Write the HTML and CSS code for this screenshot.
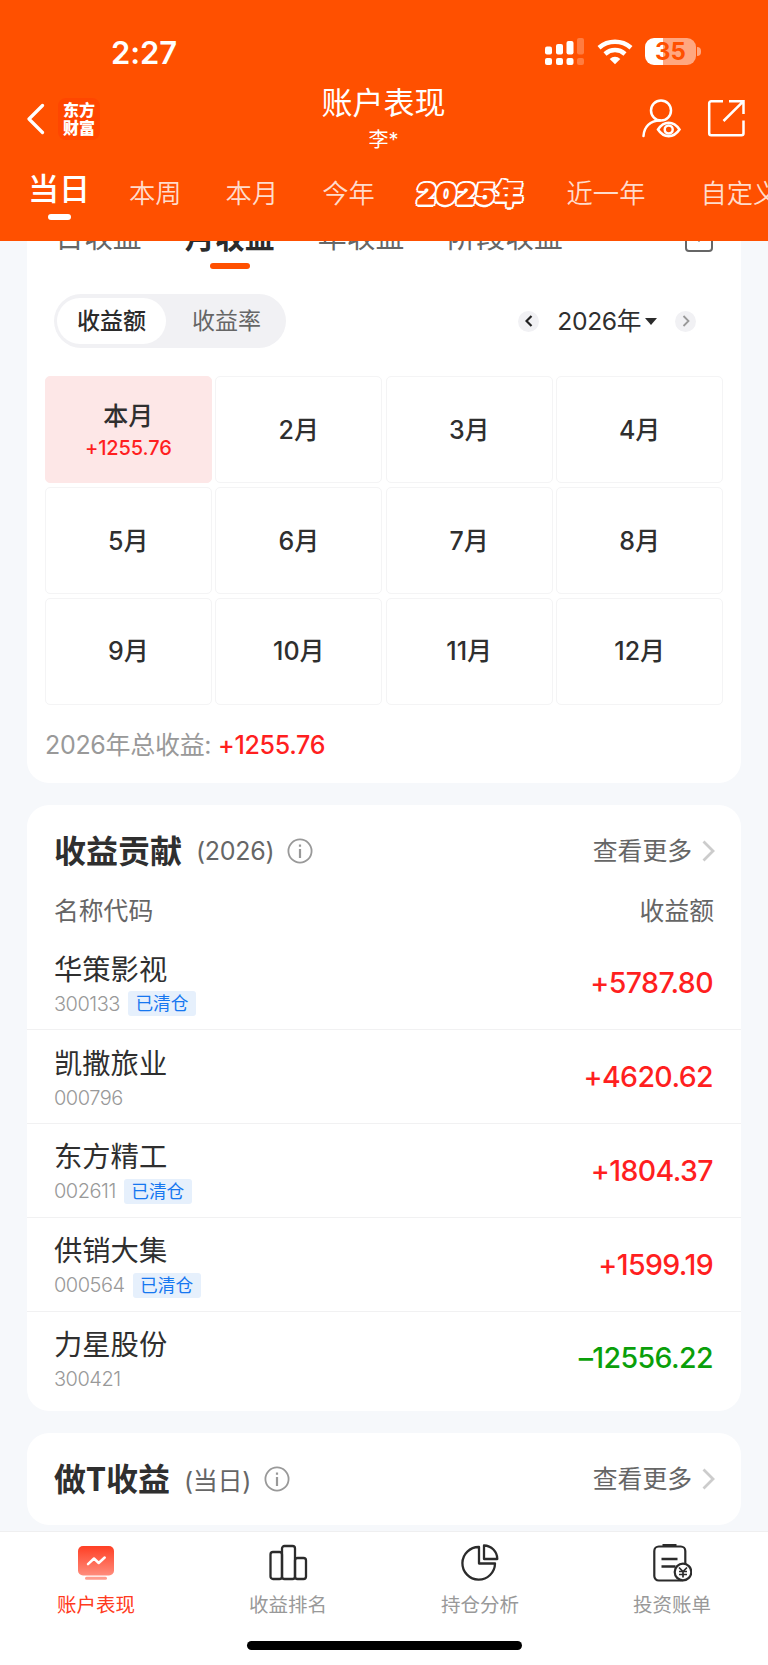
FILE: index.html
```html
<!DOCTYPE html>
<html lang="zh-CN">
<head>
    <meta charset="UTF-8">
    <title>账户表现</title>
    <link rel="stylesheet" href="styles.css">
</head>
<body>
<header class="header">
    <div class="status">
        <span class="time">2:27</span>
        <div class="statusIcons">
            <svg class="signal" width="40" height="28" viewBox="0 0 40 28" fill="#fff">
                <rect x="0" y="8.500" width="7" height="8" rx="2"/>
                <rect x="11" y="6" width="7" height="10.500" rx="2"/>
                <rect x="21.500" y="3" width="7" height="13.500" rx="2"/>
                <rect x="32" y="0" width="7" height="16.500" rx="2" opacity=".25"/>
                <rect x="0" y="20" width="7" height="7" rx="2"/>
                <rect x="11" y="20" width="7" height="7" rx="2"/>
                <rect x="21.500" y="20" width="7" height="7" rx="2"/>
                <rect x="32" y="20" width="7" height="7" rx="2" opacity=".25"/>
            </svg>
            <svg class="wifi" width="36" height="26" viewBox="0 0 36 26" fill="none" stroke="#fff" stroke-width="4.600">
                <path d="M2 8.700Q9 2.800 18 2.800T34 8.700"/>
                <path d="M8 14.900Q12.500 11 18 11T28 14.900"/>
                <path d="M18 25.300l-5.300-5.400Q15 17.700 18 17.700t5.300 2.200z" fill="#fff" stroke="none"/>
            </svg>
            <div class="battery"><span>35</span></div>
            <i class="batteryCap"></i>
        </div>
    </div>
    <div class="titleBar">
        <div class="left">
            <svg width="18" height="32" viewBox="0 0 18 32" fill="none" stroke="#fff" stroke-width="3.200" stroke-linecap="round" stroke-linejoin="round">
                <path d="M15.500 2.500L2 16l13.500 13.500"/>
            </svg>
            <div class="logo">东方<br>财富</div>
        </div>
        <div class="title">
            <h1>账户表现</h1>
            <p>李*</p>
        </div>
        <div class="right">
            <svg width="40" height="40" viewBox="0 0 40 40" fill="none" stroke="#fff" stroke-width="2.500" stroke-linecap="round">
                <circle cx="20" cy="11.500" r="10"/>
                <path d="M2.500 37C3 28 9 21.500 19 21.500"/>
                <path d="M17 30.500Q21.500 23.800 27.700 23.800T38.500 30.500Q34 37.200 27.700 37.200T17 30.500z"/>
                <circle cx="27.700" cy="30.500" r="4"/>
            </svg>
            <svg width="38" height="38" viewBox="0 0 38 38" fill="none" stroke="#fff" stroke-width="2.500">
                <path d="M16 2.200H4.200a2 2 0 0 0-2 2v30a2 2 0 0 0 2 2H34.500a2 2 0 0 0 2-2V21.500"/>
                <path d="M22 2.200H36.500V15M36 2.700L16.500 22"/>
            </svg>
        </div>
    </div>
    <nav class="periods">
        <a class="period active">当日</a>
        <a class="period">本周</a>
        <a class="period">本月</a>
        <a class="period">今年</a>
        <a class="period special">2025年</a>
        <a class="period year1">近一年</a>
        <a class="period">自定义</a>
    </nav>
</header>

<main class="content">
    <section class="card calendar">
        <div class="tabs">
            <span class="tab">日收益</span>
            <span class="tab active">月收益</span>
            <span class="tab">年收益</span>
            <span class="tab">阶段收益</span>
            <svg class="tabIcon" width="28" height="28" viewBox="0 0 28 28" fill="none" stroke="#666" stroke-width="2">
                <rect x="1" y="2" width="26" height="25" rx="3"/>
                <path d="M14 8v9.500"/>
            </svg>
        </div>
        <div class="tabLine"><i></i></div>
        <div class="controls">
            <div class="toggle">
                <span class="on">收益额</span>
                <span>收益率</span>
            </div>
            <div class="year">
                <i class="round">
                    <svg width="8" height="12" viewBox="0 0 8 12" fill="none" stroke="#222" stroke-width="2.200"><path d="M6.500 1L1.500 6l5 5"/></svg>
                </i>
                <span>2026年</span>
                <i class="caret"></i>
                <i class="round">
                    <svg width="8" height="12" viewBox="0 0 8 12" fill="none" stroke="#999" stroke-width="1.800"><path d="M1.500 1l5 5-5 5"/></svg>
                </i>
            </div>
        </div>
        <div class="months">
            <div class="month current">本月<small>+1255.76</small></div>
            <div class="month">2月</div>
            <div class="month">3月</div>
            <div class="month">4月</div>
            <div class="month">5月</div>
            <div class="month">6月</div>
            <div class="month">7月</div>
            <div class="month">8月</div>
            <div class="month">9月</div>
            <div class="month">10月</div>
            <div class="month">11月</div>
            <div class="month">12月</div>
        </div>
        <p class="total">2026年总收益: <b>+1255.76</b></p>
    </section>

    <section class="card contribution">
        <div class="cardHead">
            <h2>收益贡献</h2>
            <span class="sub">(2026)</span>
            <svg class="info" width="26" height="26" viewBox="0 0 26 26" fill="none" stroke="#999" stroke-width="1.800">
                <circle cx="13" cy="13" r="11.600"/>
                <path d="M13 11v9M13 6.500v2.300" stroke-width="2.200"/>
            </svg>
            <a class="more">查看更多
                <svg width="13" height="22" viewBox="0 0 13 22" fill="none" stroke="#ccc" stroke-width="2.800"><path d="M1.500 1.500L11 11l-9.500 9.500"/></svg>
            </a>
        </div>
        <div class="columns"><span>名称代码</span><span>收益额</span></div>
        <div class="stock">
            <div class="name">华策影视<small>300133<em>已清仓</em></small></div>
            <span class="amount">+5787.80</span>
        </div>
        <div class="stock">
            <div class="name">凯撒旅业<small>000796</small></div>
            <span class="amount">+4620.62</span>
        </div>
        <div class="stock">
            <div class="name">东方精工<small>002611<em>已清仓</em></small></div>
            <span class="amount">+1804.37</span>
        </div>
        <div class="stock">
            <div class="name">供销大集<small>000564<em>已清仓</em></small></div>
            <span class="amount">+1599.19</span>
        </div>
        <div class="stock">
            <div class="name">力星股份<small>300421</small></div>
            <span class="amount down">–12556.22</span>
        </div>
    </section>

    <section class="card trades">
        <div class="cardHead">
            <h2>做T收益</h2>
            <span class="sub">(当日)</span>
            <svg class="info" width="26" height="26" viewBox="0 0 26 26" fill="none" stroke="#999" stroke-width="1.800">
                <circle cx="13" cy="13" r="11.600"/>
                <path d="M13 11v9M13 6.500v2.300" stroke-width="2.200"/>
            </svg>
            <a class="more">查看更多
                <svg width="13" height="22" viewBox="0 0 13 22" fill="none" stroke="#ccc" stroke-width="2.800"><path d="M1.500 1.500L11 11l-9.500 9.500"/></svg>
            </a>
        </div>
    </section>
</main>

<footer class="footer">
    <nav class="bottomNav">
        <a class="item active">
            <svg width="40" height="40" viewBox="0 0 40 40">
                <defs>
                    <linearGradient id="screen" x1="0" y1="0" x2="0" y2="1">
                        <stop offset="0" stop-color="#ff3f24"/>
                        <stop offset="1" stop-color="#ff8c7c"/>
                    </linearGradient>
                </defs>
                <rect x="2" y="3" width="36" height="29.500" rx="5" fill="url(#screen)"/>
                <rect x="9" y="33.700" width="22" height="3" rx="1.500" fill="#ff9c8e"/>
                <path d="M12 21.200l6-5.700 4.700 4.500 6-5.500" fill="none" stroke="#fff" stroke-width="2.500" stroke-linecap="round" stroke-linejoin="round"/>
            </svg>
            账户表现
        </a>
        <a class="item">
            <svg width="40" height="40" viewBox="0 0 40 40" fill="none" stroke="#2b2b2b" stroke-width="2.300">
                <rect x="2.500" y="9" width="11.500" height="27" rx="2.500"/>
                <rect x="14" y="3" width="13" height="33" rx="2.500"/>
                <rect x="27" y="15" width="11" height="21" rx="2.500"/>
            </svg>
            收益排名
        </a>
        <a class="item">
            <svg width="40" height="40" viewBox="0 0 40 40" fill="none" stroke="#2b2b2b" stroke-width="2.300" stroke-linejoin="round">
                <path d="M19 4A16.300 16.300 0 1 0 35 20.500H19z"/>
                <path d="M24 2.500V16h13.300A13.500 13.500 0 0 0 24 2.500z"/>
            </svg>
            持仓分析
        </a>
        <a class="item">
            <svg width="40" height="40" viewBox="0 0 40 40" fill="none" stroke="#2b2b2b" stroke-width="2.200">
                <rect x="2.300" y="3.500" width="31" height="34" rx="4.500"/>
                <path d="M10.500 2.500h14" stroke-width="3"/>
                <path d="M9.500 16h16M9.500 23.500h14" stroke-width="2.400"/>
                <circle cx="31" cy="29" r="8.300" fill="#fff"/>
                <path d="M27 24.500l4 4 4-4M31 28.500v6M27 28.500h8M27 31.500h8" stroke-width="1.700"/>
            </svg>
            投资账单
        </a>
    </nav>
    <i class="homeBar"></i>
</footer>
</body>
</html>
```

FILE: styles.css
```css
* {
    box-sizing: border-box;
}

body {
    width: 768px;
    height: 1665px;
    margin: 0;
    overflow: hidden;
    font-family: Inter, "Noto Sans CJK SC", sans-serif;
    color: #2f2f2f;
    background: #f6f8fb;
}

h1, h2, p {
    margin: 0;
}

i, em {
    font-style: normal;
}

svg {
    display: block;
    flex-shrink: 0;
}

/* header */

.header {
    height: 241px;
    overflow: hidden;
    color: #fff;
    background: #ff5000;
}

.status {
    display: flex;
    justify-content: space-between;
    height: 84px;
    padding: 38px 67px 0 111px;
}

.time {
    font-size: 31px;
    line-height: 30px;
    font-weight: 600;
    letter-spacing: -.1px;
}

.statusIcons {
    display: flex;
    align-items: flex-start;
}

.wifi {
    margin: 1px 12px 0 12px;
}

.battery {
    width: 51px;
    height: 27px;
    border-radius: 9px;
    text-align: center;
    font-size: 24px;
    line-height: 27px;
    font-weight: 700;
    color: #ff5000;
    background: linear-gradient(90deg, #fff 35%, #ffa780 35%);
}

.batteryCap {
    width: 4px;
    height: 9px;
    margin: 9px 0 0 1px;
    border-radius: 0 5px 5px 0;
    background: #ffa780;
}

.titleBar {
    display: grid;
    grid-template-columns: 1fr 200px 1fr;
    height: 72px;
    padding: 0 23px 0 27px;
}

.left {
    display: flex;
    align-items: center;
    gap: 13px;
    height: 70px;
}

.logo {
    width: 42px;
    height: 42px;
    padding-top: 3px;
    border-radius: 8px;
    text-align: center;
    font-family: "Noto Sans CJK SC", sans-serif;
    font-size: 16px;
    line-height: 17.500px;
    font-weight: 900;
    background: #ff4600;
}

.title {
    margin-left: -5px;
    text-align: center;
}

.title h1 {
    font-size: 31px;
    line-height: 38px;
    font-weight: 400;
}

.title p {
    font-size: 20px;
    line-height: 36px;
}

.right {
    display: flex;
    justify-content: flex-end;
    gap: 26px;
    padding-top: 15px;
}

.periods {
    display: flex;
    padding-left: 28px;
    height: 85px;
    white-space: nowrap;
}

.period {
    padding-top: 20px;
    margin-right: 44px;
    font-size: 26.300px;
    line-height: 36px;
    color: #ffdccc;
    font-weight: 350;
}

.period.active {
    padding-top: 13px;
    margin-right: 39px;
    font-size: 31px;
    line-height: 40px;
    font-weight: 500;
    color: #fff;
}

.period.active::after {
    content: "";
    display: block;
    width: 23px;
    height: 6px;
    margin: 5px auto 0;
    border-radius: 3px;
    background: #fff;
}

.period.special {
    margin: 0 43.500px 0 -2px;
    font-size: 28px;
    font-weight: 900;
    letter-spacing: .7px;
    color: #ff5000;
    -webkit-text-stroke: 1px #ff5000;
    text-shadow: 2.500px 0 #fff, -2.500px 0 #fff, 0 2.500px #fff, 0 -2.500px #fff,
        1.800px 1.800px #fff, -1.800px 1.800px #fff, 1.800px -1.800px #fff, -1.800px -1.800px #fff;
    transform: skewX(-5deg);
}

.period.year1 {
    margin-right: 55px;
}

/* cards */

.content {
    height: 1290px;
    padding: 0 27px;
    overflow: hidden;
}

.card {
    margin-bottom: 22px;
    border-radius: 22px;
    background: #fff;
}

.calendar {
    height: 542px;
    border-radius: 0 0 22px 22px;
}

.tabs {
    display: flex;
    align-items: flex-end;
    height: 12px;
    padding: 0 28px 0 28px;
    overflow: hidden;
}

.tab {
    margin-right: 43px;
    font-size: 28.900px;
    line-height: 31px;
    color: #666;
}

.tab.active {
    font-size: 30px;
    line-height: 32px;
    font-weight: 700;
    color: #2b2b2b;
}

.tabIcon {
    margin: 0 0 1px auto;
}

.tabLine {
    height: 41px;
    padding: 10px 0 0 183px;
}

.tabLine i {
    display: block;
    width: 40px;
    height: 6px;
    border-radius: 3px;
    background: #ff5000;
}

.controls {
    display: flex;
    justify-content: space-between;
    align-items: center;
    height: 54px;
    padding: 0 45px 0 27px;
}

.toggle {
    display: flex;
    width: 232px;
    height: 54px;
    padding: 4px 3px;
    border-radius: 27px;
    background: #f1f1f4;
}

.toggle span {
    width: 109px;
    border-radius: 23px;
    text-align: center;
    font-size: 23px;
    line-height: 47px;
    color: #666;
}

.toggle span + span {
    margin-left: 6px;
}

.toggle .on {
    font-weight: 500;
    color: #2b2b2b;
    background: #fff;
}

.year {
    display: flex;
    align-items: center;
    font-size: 24.700px;
    line-height: 36px;
}

.year span {
    margin-left: 18px;
    letter-spacing: -.4px;
}

.round {
    display: flex;
    align-items: center;
    justify-content: center;
    width: 21px;
    height: 21px;
    border-radius: 50%;
    background: #f1f1f4;
}

.caret {
    margin: 1px 18px 0 4px;
    border: 6.500px solid transparent;
    border-top: 7px solid #2b2b2b;
    border-bottom: 0;
}

.months {
    display: grid;
    grid-template-columns: repeat(4, 1fr);
    grid-auto-rows: 107px;
    gap: 3.800px;
    padding: 28.400px 18px 0;
}

.month {
    display: flex;
    flex-direction: column;
    align-items: center;
    justify-content: center;
    border: 1px solid #f4f4f5;
    border-radius: 5px;
    font-size: 25px;
    line-height: 34px;
    font-weight: 550;
}

.month small {
    font-size: 20px;
    line-height: 30px;
    font-weight: 500;
    letter-spacing: -.1px;
    color: #ff1f1f;
}

.month.current {
    padding-top: 2px;
    border-color: #fde7e7;
    background: #fde7e7;
}

.total {
    padding: 22px 18px 0;
    font-size: 25px;
    line-height: 36px;
    letter-spacing: -.3px;
    color: #999;
}

.total b {
    font-weight: 550;
    color: #ff1f1f;
}

.contribution {
    height: 606px;
}

.cardHead {
    display: flex;
    align-items: center;
    height: 92px;
    padding: 0 26px 0 27px;
}

.cardHead h2 {
    margin-top: -4px;
    font-family: "Noto Sans CJK SC", sans-serif;
    font-size: 32px;
    line-height: 44px;
    font-weight: 700;
}

.sub {
    margin: 0 13px 0 14px;
    font-size: 25px;
    letter-spacing: -.3px;
    color: #666;
}

.more {
    display: flex;
    align-items: center;
    gap: 10px;
    margin-left: auto;
    font-size: 24.800px;
    line-height: 36px;
    color: #666;
}

.columns {
    display: flex;
    justify-content: space-between;
    height: 39.500px;
    padding: 0 27px;
    font-size: 24.800px;
    line-height: 28px;
    color: #666;
}

.stock {
    display: flex;
    justify-content: space-between;
    align-items: center;
    height: 93.800px;
    padding: 0 28px 0 27px;
    border-bottom: 1px solid #f1f1f2;
}

.stock:last-child {
    height: 92px;
    border-bottom: 0;
}

.name {
    padding-top: 2px;
    font-size: 28.300px;
    line-height: 38px;
}

.name small {
    display: flex;
    align-items: center;
    gap: 8px;
    height: 26px;
    margin-top: 2px;
    font-size: 20px;
    font-weight: 300;
    letter-spacing: -.5px;
    color: #999;
}

.name em {
    width: 68px;
    height: 25px;
    border-radius: 3px;
    text-align: center;
    font-size: 17.700px;
    line-height: 26px;
    font-weight: 400;
    letter-spacing: 0;
    color: #1677f0;
    background: #e6f0fc;
}

.amount {
    font-size: 28.500px;
    font-weight: 550;
    letter-spacing: -.6px;
    color: #ff1f1f;
}

.amount.down {
    color: #0a9f0a;
}

.trades {
    height: 92px;
}

/* bottom bar */

.footer {
    height: 134px;
    border-top: 1px solid #efeff0;
    background: #fff;
}

.bottomNav {
    display: flex;
    height: 109px;
    padding-top: 11px;
}

.item {
    display: flex;
    flex-direction: column;
    align-items: center;
    width: 192px;
    font-size: 19.500px;
    line-height: 29px;
    color: #999;
}

.item svg {
    margin-bottom: 8px;
}

.item.active {
    color: #ff3a20;
}

.homeBar {
    display: block;
    width: 275px;
    height: 9px;
    margin: 0 auto;
    border-radius: 5px;
    background: #000;
}
```
